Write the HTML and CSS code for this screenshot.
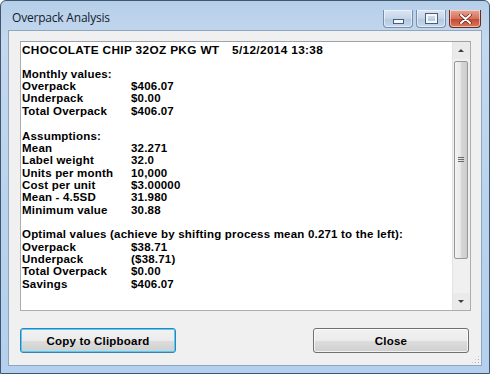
FILE: index.html
```html
<!DOCTYPE html>
<html lang="en">
<head>
  <meta charset="UTF-8">
  <title>Overpack Analysis</title>
  <link rel="stylesheet" href="styles.css">
</head>
<body>
  <div class="window">
    <div class="titlebar">
      <span class="title">Overpack Analysis</span>
      <div class="controls">
        <div class="ctl min"><span class="min-bar"></span></div>
        <div class="ctl max"><span class="max-box"></span></div>
        <div class="ctl close">
          <svg width="13" height="10" viewBox="0 0 13 10">
            <path d="M2 1 L11 9 M11 1 L2 9" stroke="#6b1c12" stroke-width="3.4" stroke-linecap="round"/>
            <path d="M2 1 L11 9 M11 1 L2 9" stroke="#ffffff" stroke-width="2" stroke-linecap="round"/>
          </svg>
        </div>
      </div>
    </div>
    <div class="client">
      <div class="textbox">
        <div class="report">
          <div class="line head"><span class="product">CHOCOLATE CHIP 32OZ PKG WT</span><span>5/12/2014 13:38</span></div>
          <div class="line"></div>
          <div class="line">Monthly values:</div>
          <div class="line"><span class="lbl">Overpack</span>$406.07</div>
          <div class="line"><span class="lbl">Underpack</span>$0.00</div>
          <div class="line"><span class="lbl">Total Overpack</span>$406.07</div>
          <div class="line"></div>
          <div class="line">Assumptions:</div>
          <div class="line"><span class="lbl">Mean</span>32.271</div>
          <div class="line"><span class="lbl">Label weight</span>32.0</div>
          <div class="line"><span class="lbl">Units per month</span>10,000</div>
          <div class="line"><span class="lbl">Cost per unit</span>$3.00000</div>
          <div class="line"><span class="lbl">Mean - 4.5SD</span>31.980</div>
          <div class="line"><span class="lbl">Minimum value</span>30.88</div>
          <div class="line"></div>
          <div class="line">Optimal values (achieve by shifting process mean 0.271 to the left):</div>
          <div class="line"><span class="lbl">Overpack</span>$38.71</div>
          <div class="line"><span class="lbl">Underpack</span>($38.71)</div>
          <div class="line"><span class="lbl">Total Overpack</span>$0.00</div>
          <div class="line"><span class="lbl">Savings</span>$406.07</div>
        </div>
        <div class="scrollbar">
          <div class="arrow up"></div>
          <div class="track">
            <div class="thumb"><span class="grip"></span></div>
          </div>
          <div class="arrow down"></div>
        </div>
      </div>
      <div class="buttons">
        <button class="btn default">Copy to Clipboard</button>
        <button class="btn">Close</button>
      </div>
      <div class="sizegrip"></div>
    </div>
  </div>
</body>
</html>
```

FILE: styles.css
```css
body {
  margin: 0;
  background: #ffffff;
  font-family: "Liberation Sans", Arial, sans-serif;
}
.window {
  width: 490px;
  height: 374px;
  box-sizing: border-box;
  border: 1px solid #3e5670;
  border-radius: 6px 6px 0 0;
  background: linear-gradient(to bottom, #b6cfe9 0px, #c4d8ee 40px, #bad3ec 200px, #b4d0ee 374px);
  display: flex;
  flex-direction: column;
  position: relative;
}
.titlebar {
  height: 29px;
  display: flex;
  align-items: flex-start;
  justify-content: space-between;
}
.title {
  font-family: "Open Sans", "Noto Sans", sans-serif;
  font-size: 12px;
  color: #14202e;
  margin: 8px 0 0 11px;
  letter-spacing: -0.2px;
}
.controls {
  display: flex;
  gap: 3px;
  margin: 9px 8px 0 0;
}
.ctl {
  height: 17px;
  width: 28px;
  border: 1px solid #7b8ea8;
  border-top: none;
  border-radius: 0 0 4px 4px;
  background: linear-gradient(to bottom, #dbe6f3 0%, #c4d5ea 50%, #b2c7e1 51%, #c4d9ee 100%);
  display: flex;
  align-items: center;
  justify-content: center;
  box-shadow: inset 0 0 0 1px rgba(255,255,255,0.5);
}
.ctl.close {
  width: 30px;
  border-color: #6c2a20;
  background: linear-gradient(to bottom, #e8a494 0%, #d7705b 50%, #c4462e 51%, #d67a5c 100%);
}
.min-bar {
  width: 9px;
  height: 3px;
  background: #f4f7fb;
  border: 1px solid #4e5d73;
  margin-top: 5px;
}
.max-box {
  width: 7px;
  height: 5px;
  border: 2px solid #f4f7fb;
  outline: 1px solid #4e5d73;
}
.client {
  flex: 1;
  margin: 0 7px 7px 7px;
  background: #f0f0f0;
  border: 1px solid #8fa6bf;
  display: flex;
  flex-direction: column;
  padding: 10px 10px 0 11px;
  position: relative;
}
.textbox {
  height: 270px;
  width: 451px;
  box-sizing: border-box;
  border: 1px solid #abadb3;
  border-top-color: #9ea3ab;
  background: #ffffff;
  display: flex;
}
.report {
  flex: 1;
  padding: 0 0 0 1px;
  font-size: 11.5px;
  letter-spacing: 0.2px;
  font-weight: bold;
  color: #000000;
  line-height: 12.37px;
  overflow: hidden;
  white-space: nowrap;
}
.line {
  height: 12.37px;
}
.head {
  font-size: 11.8px;
  letter-spacing: 0.35px;
  line-height: 14px;
  margin-top: 1px;
}
.product {
  display: inline-block;
  width: 210px;
}
.lbl {
  display: inline-block;
  width: 109px;
}
.scrollbar {
  width: 17px;
  display: flex;
  flex-direction: column;
  background: #eaeaea;
  border-left: 1px solid #e3e3e3;
}
.arrow {
  height: 17px;
  position: relative;
}
.arrow::after {
  content: "";
  position: absolute;
  left: 5px;
  border-left: 3px solid transparent;
  border-right: 3px solid transparent;
}
.arrow.up::after {
  top: 7px;
  border-bottom: 3px solid #404040;
}
.arrow.down::after {
  top: 7px;
  border-top: 3px solid #404040;
}
.track {
  flex: 1;
  background: #f0f0f0;
  padding-top: 2px;
}
.thumb {
  height: 198px;
  margin: 0 0 0 1px;
  width: 14px;
  box-sizing: border-box;
  border: 1px solid #979797;
  border-radius: 2px;
  background: linear-gradient(to right, #f3f3f3 0%, #e8e8e8 45%, #d6d6d6 55%, #cdcdcd 100%);
  display: flex;
  align-items: center;
  justify-content: center;
}
.grip {
  width: 6px;
  height: 6px;
  background: repeating-linear-gradient(to bottom, #6a6a6a 0 1px, transparent 1px 2px);
}
.buttons {
  display: flex;
  justify-content: space-between;
  margin-top: 17px;
  width: 449px;
}
.btn {
  width: 156px;
  height: 25px;
  font-family: "Liberation Sans", Arial, sans-serif;
  font-size: 11.5px;
  letter-spacing: 0.2px;
  font-weight: bold;
  color: #000000;
  border: 1px solid #707070;
  border-radius: 3px;
  background: linear-gradient(to bottom, #f2f2f2 0%, #ebebeb 50%, #dddddd 51%, #cfcfcf 100%);
  box-shadow: inset 0 0 0 1px rgba(255,255,255,0.7);
  padding: 0;
}
.btn.default {
  border-color: #3c7fb1;
  box-shadow: inset 0 0 0 1px #48d2fb;
}
.sizegrip {
  position: absolute;
  right: 1px;
  bottom: 1px;
  width: 9px;
  height: 9px;
  background:
    radial-gradient(circle, #a8b0b8 0.8px, transparent 1px) 0 0 / 3px 3px;
  clip-path: polygon(100% 0, 100% 100%, 0 100%);
}
```
